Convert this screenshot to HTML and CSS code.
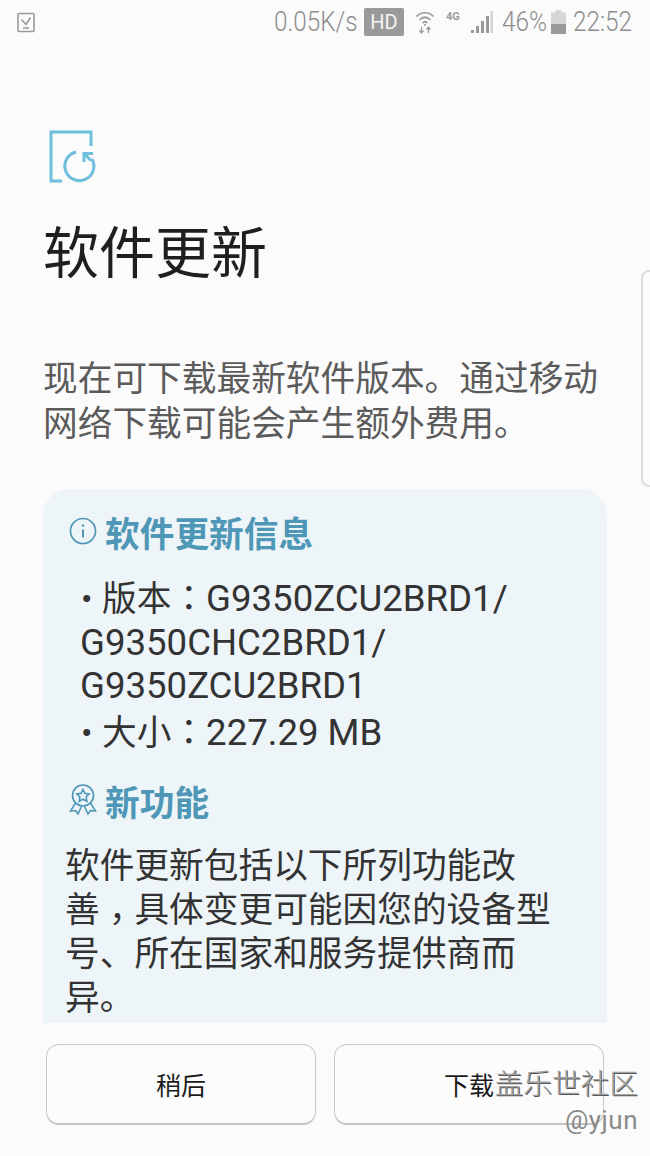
FILE: index.html
```html
<!DOCTYPE html>
<html lang="zh-CN">
<head>
<meta charset="utf-8">
<title>软件更新</title>
<link rel="stylesheet" href="styles.css">
</head>
<body>
<div class="screen">
  <header class="status">
    <svg class="st-task" width="18" height="21" viewBox="0 0 18 21" fill="none" stroke="#9a9a9a" stroke-width="1.6"><rect x="1" y="1.5" width="16" height="18" rx="1"/><path d="M4.5 7.5l4.5 5 4.5-7"/><path d="M6 16h6"/></svg>
    <div class="status-right">
      <span class="st-text st-speed">0.05K/s</span>
      <span class="st-hd">HD</span>
      <svg class="st-wifi" width="20" height="24" viewBox="0 0 20 24" fill="none" stroke="#9a9a9a" stroke-width="1.7"><path d="M1.5 6.5C6 1.5 14 1.5 18.500 6.500"/><path d="M4.500 10C8 6.500 12 6.500 15.500 10"/><path d="M7.500 13C9 11.500 11 11.500 12.500 13"/><circle cx="10" cy="15" r="1" fill="#9a9a9a" stroke="none"/><path d="M6.500 17v6M4.500 20.500l2 2.500 2-2.500M13.500 23v-6M11.500 19.500l2-2.500 2 2.500" stroke-width="1.300"/></svg>
      <span class="st-4g">4G</span>
      <svg class="st-signal" width="22" height="22" viewBox="0 0 22 22"><rect x="0" y="19" width="3" height="3" fill="#9a9a9a"/><rect x="5" y="15" width="3" height="7" fill="#9a9a9a"/><rect x="10" y="10" width="3" height="12" fill="#9a9a9a"/><rect x="15" y="5" width="3" height="17" fill="#9a9a9a"/><rect x="19.500" y="0" width="2.500" height="22" fill="#d4d4d4"/></svg>
      <span class="st-text st-batt">46%</span>
      <svg class="st-battery" width="15" height="24" viewBox="0 0 15 24"><path d="M4.500 0h6v2.500H15V24H0V2.500h4.500z" fill="#d6d6d6"/><rect y="14" width="15" height="10" fill="#9a9a9a"/></svg>
      <span class="st-text st-time">22:52</span>
    </div>
  </header>

  <main class="content">
    <svg class="app-icon" width="48" height="54" viewBox="0 0 48 54" fill="none" stroke="#6dbfdc" stroke-width="3"><path d="M13 51H2V2h40v14"/><path d="M27 22A14.500 14.500 0 1 0 43 29"/><path d="M35 32V23.500h9M36 24.500l6 6"/></svg>
    <h1 class="title">软件更新</h1>
    <p class="lead">现在可下载最新软件版本。通过移动网络下载可能会产生额外费用。</p>

    <section class="card">
      <h2 class="card-head card-head-info">
        <svg class="head-icon" width="28" height="28" viewBox="0 0 28 28" fill="none" stroke="#4f97b6" stroke-width="1.700"><circle cx="14" cy="14" r="12.500"/><path d="M14 12.500v8" stroke-width="2"/><circle cx="14" cy="8.500" r="1.200" fill="#4f97b6" stroke="none"/></svg>
        软件更新信息
      </h2>
      <ul class="facts">
        <li><span class="cjk">版本<span class="colon" lang="zh-TW">：</span></span>G9350ZCU2BRD1/<br>G9350CHC2BRD1/<br>G9350ZCU2BRD1</li>
        <li><span class="cjk">大小<span class="colon" lang="zh-TW">：</span></span>227.29 MB</li>
      </ul>
      <h2 class="card-head card-head-new">
        <svg class="head-icon" width="28" height="32" viewBox="0 0 28 32" fill="none" stroke="#4f97b6" stroke-width="1.600"><circle cx="14" cy="11.500" r="10.500"/><path d="M14 5.500l1.900 3.900 4.200.6-3 3 .7 4.200-3.800-2-3.800 2 .7-4.200-3-3 4.200-.6z"/><path d="M6.500 19L1.500 27l5-.5L9 30l3.500-7.500M21.500 19l5 8-5-.5L19 30l-3.500-7.500"/></svg>
        新功能
      </h2>
      <p class="body">软件更新包括以下所列功能改善<span class="comma" lang="zh-TW">，</span>具体变更可能因您的设备型号、所在国家和服务提供商而异。</p>
    </section>
  </main>

  <footer class="actions">
    <button class="btn">稍后</button>
    <button class="btn">下载</button>
  </footer>

  <div class="edge-panel"></div>
  <div class="watermark">
    <span class="wm-name">盖乐世社区</span>
    <span class="wm-user">@yjun</span>
  </div>
</div>
</body>
</html>
```
FILE: styles.css
```css
* { box-sizing: border-box; }
html, body { margin: 0; padding: 0; }
body {
  background: #fbfbfb;
  font-family: "Roboto", "Noto Sans CJK SC", sans-serif;
}
.screen {
  position: relative;
  width: 650px;
  height: 1156px;
  overflow: hidden;
  display: flex;
  flex-direction: column;
  background: #fbfbfb;
}
.status {
  height: 44px;
  flex: none;
  display: flex;
  align-items: center;
  justify-content: space-between;
  padding: 0 17px 0 17px;
}
.status-right { display: flex; align-items: center; }
.st-text {
  display: inline-block;
  font-family: "Roboto", sans-serif;
  font-size: 27px;
  font-weight: 300;
  color: #8e8e8e;
  line-height: 46px;
  white-space: nowrap;
  transform: scaleX(0.9);
  transform-origin: left center;
}
.st-speed { width: 83px; }
.st-hd {
  width: 40px;
  height: 28px;
  margin-left: 7px;
  background: #9a9a9a;
  color: #f4f4f4;
  font: 400 20px/28px "Roboto", sans-serif;
  text-align: center;
  border-radius: 2px;
}
.st-wifi { margin-left: 11px; }
.st-4g {
  font: 700 11px/14px "Roboto", sans-serif;
  color: #9a9a9a;
  margin: -10px 0 0 11px;
  width: 18px;
}
.st-signal { margin-left: 7px; }
.st-batt { margin-left: 9px; width: 44px; }
.st-battery { margin-left: 5px; }
.st-time { margin-left: 7px; width: 60px; }

.content {
  flex: 1;
  min-height: 0;
  padding: 86px 43px 0 43px;
  display: flex;
  flex-direction: column;
  overflow: hidden;
}
.app-icon { margin-left: 6px; flex: none; }
.title {
  margin: 34px 0 0 0;
  font-size: 56px;
  font-weight: 400;
  line-height: 72px;
  color: #1f1f1f;
}
.lead {
  margin: 67px 0 0 0;
  font-size: 34.700px;
  line-height: 45px;
  color: #5b5b5b;
  width: 560px;
}
.card {
  margin-top: 42px;
  width: 564px;
  flex: 1;
  min-height: 0;
  background: #eef5f9;
  border-radius: 26px 26px 0 0;
  padding: 23px 23px 0;
  overflow: hidden;
}
.card-head {
  margin: 0;
  display: flex;
  align-items: center;
  gap: 8px;
  font-size: 34.700px;
  font-weight: 700;
  line-height: 46px;
  color: #4f97b6;
}
.card-head-info .head-icon { margin: -8px 0 0 3px; }
.card-head-new { margin-top: 26px; }
.card-head-new .head-icon { margin: -8px 0 0 3px; }
.facts {
  list-style: none;
  margin: 17px 0 0;
  padding: 0 0 0 14px;
  font-size: 36.600px;
  line-height: 43px;
  color: #333;
}
.facts li { margin-bottom: 2px; }
.facts li::before {
  content: "•";
  display: inline-block;
  width: 21px;
  padding-left: 1px;
  font-size: 34px;
}
.cjk { font-size: 34.700px; }
.colon { font-family: "Noto Sans CJK TC", sans-serif; }
.comma {
  font-family: "Noto Sans CJK TC", sans-serif;
  vertical-align: -0.28em;
  line-height: 0;
}
.body {
  margin: 17px 0 0 -1px;
  font-size: 34.700px;
  line-height: 44px;
  color: #333;
  width: 490px;
}
.actions {
  flex: none;
  height: 133px;
  display: flex;
  gap: 18px;
  padding: 21px 46px 0;
}
.btn {
  width: 270px;
  height: 81px;
  background: #fcfcfc;
  border: 1px solid #c9c9c9;
  border-bottom: 2px solid #c4c4c4;
  border-radius: 13px;
  font-family: "Noto Sans CJK SC", sans-serif;
  font-size: 25px;
  color: #1a1a1a;
  padding: 0;
}
.edge-panel {
  position: absolute;
  left: 641px;
  top: 270px;
  width: 20px;
  height: 217px;
  border: 2px solid #dcdcdc;
  border-radius: 8px;
}
.watermark {
  position: absolute;
  right: 12px;
  top: 1063px;
  display: flex;
  flex-direction: column;
  align-items: flex-end;
}
.wm-name {
  font-family: "Noto Sans CJK SC", sans-serif;
  font-size: 28.700px;
  font-weight: 300;
  line-height: 38px;
  color: #a2a2a2;
  text-shadow: 1px 1px 0 #555;
}
.wm-user {
  font-family: "Roboto", sans-serif;
  font-size: 26px;
  line-height: 38px;
  color: #8a8a8a;
  letter-spacing: 0.500px;
}
```
